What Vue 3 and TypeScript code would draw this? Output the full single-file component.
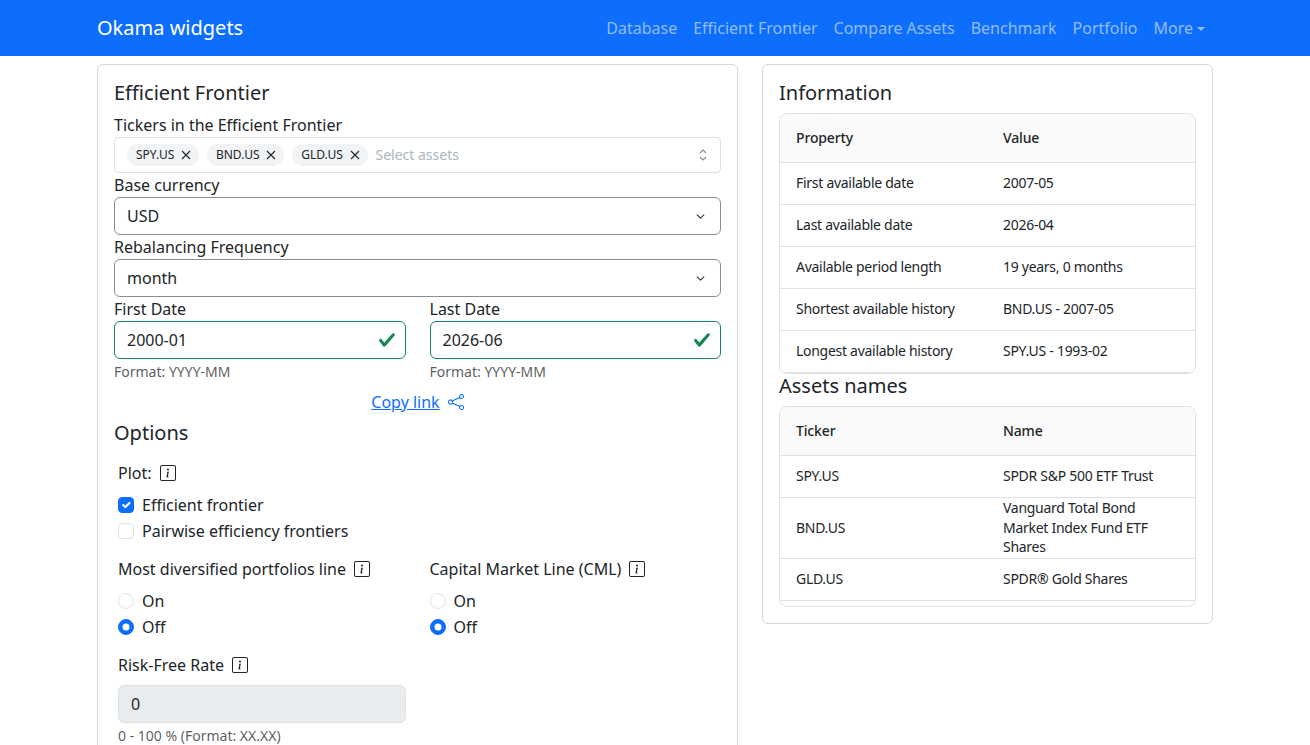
<script setup lang="ts">
import { ref } from "vue";

const navLinks = ["Database", "Efficient Frontier", "Compare Assets", "Benchmark", "Portfolio"];
const tickers = ["SPY.US", "BND.US", "GLD.US"];

const firstDate = ref("2000-01");
const lastDate = ref("2026-06");
const riskFree = ref("0");
const plotFrontier = ref(true);
const plotPairwise = ref(false);
const mdpLine = ref("off");
const cmlLine = ref("off");

const info = [
  ["First available date", "2007-05"],
  ["Last available date", "2026-04"],
  ["Available period length", "19 years, 0 months"],
  ["Shortest available history", "BND.US - 2007-05"],
  ["Longest available history", "SPY.US - 1993-02"],
];
const names = [
  ["SPY.US", "SPDR S&P 500 ETF Trust"],
  ["BND.US", "Vanguard Total Bond Market Index Fund ETF Shares"],
  ["GLD.US", "SPDR® Gold Shares"],
];
</script>

<template>
  <div class="page">
    <nav class="navbar">
      <div class="nav-inner">
        <span class="brand">Okama widgets</span>
        <ul class="nav-links">
          <li v-for="link in navLinks" :key="link">{{ link }}</li>
          <li class="more">More<span class="caret"></span></li>
        </ul>
      </div>
    </nav>

    <main class="columns">
      <section class="card form-card">
        <h5>Efficient Frontier</h5>
        <label class="lbl">Tickers in the Efficient Frontier</label>
        <div class="multi">
          <span v-for="t in tickers" :key="t" class="tag">
            {{ t }}
            <svg class="tag-x" viewBox="0 0 10 10"><path d="M1 1l8 8M9 1l-8 8" /></svg>
          </span>
          <span class="placeholder">Select assets</span>
          <svg class="updown" viewBox="0 0 10 14"><path d="M2 5l3-3 3 3M2 9l3 3 3-3" /></svg>
        </div>

        <label class="lbl">Base currency</label>
        <div class="select">
          <span>USD</span>
          <svg class="chevron" viewBox="0 0 16 16"><path d="m2 5 6 6 6-6" /></svg>
        </div>

        <label class="lbl">Rebalancing Frequency</label>
        <div class="select">
          <span>month</span>
          <svg class="chevron" viewBox="0 0 16 16"><path d="m2 5 6 6 6-6" /></svg>
        </div>

        <div class="two-col">
          <div>
            <label class="lbl">First Date</label>
            <div class="valid-wrap">
              <input v-model="firstDate" class="input valid" type="text" />
              <svg class="tick" viewBox="0 0 8 8"><path d="M2.3 6.73.6 4.53c-.4-1.04.46-1.4 1.1-.8l1.1 1.4 3.4-3.8c.6-.63 1.6-.27 1.2.7l-4 4.6c-.43.5-.8.4-1.1.1z" /></svg>
            </div>
            <div class="hint">Format: YYYY-MM</div>
          </div>
          <div>
            <label class="lbl">Last Date</label>
            <div class="valid-wrap">
              <input v-model="lastDate" class="input valid" type="text" />
              <svg class="tick" viewBox="0 0 8 8"><path d="M2.3 6.73.6 4.53c-.4-1.04.46-1.4 1.1-.8l1.1 1.4 3.4-3.8c.6-.63 1.6-.27 1.2.7l-4 4.6c-.43.5-.8.4-1.1.1z" /></svg>
            </div>
            <div class="hint">Format: YYYY-MM</div>
          </div>
        </div>

        <div class="copy-row">
          <a href="#" class="copy">Copy link</a>
          <svg class="share" viewBox="0 0 16 16"><path d="M13.5 1a1.5 1.5 0 1 0 0 3 1.5 1.5 0 0 0 0-3M11 2.5a2.5 2.5 0 1 1 .603 1.628l-6.718 3.12a2.5 2.5 0 0 1 0 1.504l6.718 3.12a2.5 2.5 0 1 1-.488.876l-6.718-3.12a2.5 2.5 0 1 1 0-3.256l6.718-3.12A2.5 2.5 0 0 1 11 2.5m-8.5 4a1.5 1.5 0 1 0 0 3 1.5 1.5 0 0 0 0-3m11 5.5a1.5 1.5 0 1 0 0 3 1.5 1.5 0 0 0 0-3" /></svg>
        </div>

        <h5 class="options-title">Options</h5>
        <div class="options">
          <div class="opt-label">
            Plot:
            <svg class="info" viewBox="0 0 16 16"><path d="M14 1a1 1 0 0 1 1 1v12a1 1 0 0 1-1 1H2a1 1 0 0 1-1-1V2a1 1 0 0 1 1-1zM2 0a2 2 0 0 0-2 2v12a2 2 0 0 0 2 2h12a2 2 0 0 0 2-2V2a2 2 0 0 0-2-2z" /><path d="m8.93 6.588-2.29.287-.082.38.45.083c.294.07.352.176.288.469l-.738 3.468c-.194.897.105 1.319.808 1.319.545 0 1.178-.252 1.465-.598l.088-.42c-.2.176-.492.246-.686.246-.275 0-.375-.193-.304-.533zM9 4.5a1 1 0 1 1-2 0 1 1 0 0 1 2 0" /></svg>
          </div>
          <label class="check"><input v-model="plotFrontier" type="checkbox" />Efficient frontier</label>
          <label class="check"><input v-model="plotPairwise" type="checkbox" />Pairwise efficiency frontiers</label>
        </div>

        <div class="two-col radios">
          <div class="radio-col first">
            <div class="opt-label">
              Most diversified portfolios line
              <svg class="info" viewBox="0 0 16 16"><path d="M14 1a1 1 0 0 1 1 1v12a1 1 0 0 1-1 1H2a1 1 0 0 1-1-1V2a1 1 0 0 1 1-1zM2 0a2 2 0 0 0-2 2v12a2 2 0 0 0 2 2h12a2 2 0 0 0 2-2V2a2 2 0 0 0-2-2z" /><path d="m8.93 6.588-2.29.287-.082.38.45.083c.294.07.352.176.288.469l-.738 3.468c-.194.897.105 1.319.808 1.319.545 0 1.178-.252 1.465-.598l.088-.42c-.2.176-.492.246-.686.246-.275 0-.375-.193-.304-.533zM9 4.5a1 1 0 1 1-2 0 1 1 0 0 1 2 0" /></svg>
            </div>
            <label class="check"><input v-model="mdpLine" type="radio" name="mdp" value="on" />On</label>
            <label class="check"><input v-model="mdpLine" type="radio" name="mdp" value="off" />Off</label>
          </div>
          <div class="radio-col">
            <div class="opt-label">
              Capital Market Line (CML)
              <svg class="info" viewBox="0 0 16 16"><path d="M14 1a1 1 0 0 1 1 1v12a1 1 0 0 1-1 1H2a1 1 0 0 1-1-1V2a1 1 0 0 1 1-1zM2 0a2 2 0 0 0-2 2v12a2 2 0 0 0 2 2h12a2 2 0 0 0 2-2V2a2 2 0 0 0-2-2z" /><path d="m8.93 6.588-2.29.287-.082.38.45.083c.294.07.352.176.288.469l-.738 3.468c-.194.897.105 1.319.808 1.319.545 0 1.178-.252 1.465-.598l.088-.42c-.2.176-.492.246-.686.246-.275 0-.375-.193-.304-.533zM9 4.5a1 1 0 1 1-2 0 1 1 0 0 1 2 0" /></svg>
            </div>
            <label class="check"><input v-model="cmlLine" type="radio" name="cml" value="on" />On</label>
            <label class="check"><input v-model="cmlLine" type="radio" name="cml" value="off" />Off</label>
          </div>
        </div>

        <div class="two-col risk">
          <div class="radio-col first">
            <div class="opt-label">
              Risk-Free Rate
              <svg class="info" viewBox="0 0 16 16"><path d="M14 1a1 1 0 0 1 1 1v12a1 1 0 0 1-1 1H2a1 1 0 0 1-1-1V2a1 1 0 0 1 1-1zM2 0a2 2 0 0 0-2 2v12a2 2 0 0 0 2 2h12a2 2 0 0 0 2-2V2a2 2 0 0 0-2-2z" /><path d="m8.93 6.588-2.29.287-.082.38.45.083c.294.07.352.176.288.469l-.738 3.468c-.194.897.105 1.319.808 1.319.545 0 1.178-.252 1.465-.598l.088-.42c-.2.176-.492.246-.686.246-.275 0-.375-.193-.304-.533zM9 4.5a1 1 0 1 1-2 0 1 1 0 0 1 2 0" /></svg>
            </div>
            <input v-model="riskFree" class="input disabled" type="text" disabled />
            <div class="hint">0 - 100 % (Format: XX.XX)</div>
          </div>
        </div>
      </section>

      <section class="card info-card">
        <h5>Information</h5>
        <div class="table-box">
          <table>
            <thead>
              <tr><th>Property</th><th>Value</th></tr>
            </thead>
            <tbody>
              <tr v-for="row in info" :key="row[0]">
                <td>{{ row[0] }}</td>
                <td>{{ row[1] }}</td>
              </tr>
            </tbody>
          </table>
        </div>
        <h5 class="names-title">Assets names</h5>
        <div class="table-box names">
          <table>
            <thead>
              <tr><th>Ticker</th><th>Name</th></tr>
            </thead>
            <tbody>
              <tr v-for="row in names" :key="row[0]">
                <td>{{ row[0] }}</td>
                <td>{{ row[1] }}</td>
              </tr>
            </tbody>
          </table>
        </div>
      </section>
    </main>
  </div>
</template>

<style>
html,
body {
  margin: 0;
  background: #fff;
}
</style>

<style scoped>
.page {
  height: 100vh;
  overflow: hidden;
  font-family: "Noto Sans", sans-serif;
  font-size: 16px;
  line-height: 1.5;
  color: #212529;
}
.navbar {
  height: 56px;
  background: #0d6efd;
}
.nav-inner {
  width: 1116px;
  height: 100%;
  margin: 0 auto;
  display: flex;
  align-items: center;
  justify-content: space-between;
}
.brand {
  font-size: 20px;
  color: #fff;
}
.nav-links {
  display: flex;
  list-style: none;
  margin: 0;
  padding: 0;
  color: rgba(255, 255, 255, 0.55);
}
.nav-links li {
  padding: 8px;
}
.caret {
  display: inline-block;
  margin-left: 4px;
  vertical-align: 3px;
  border-top: 4.8px solid;
  border-left: 4.8px solid transparent;
  border-right: 4.8px solid transparent;
}
.columns {
  width: 1116px;
  margin: 8px auto 0;
  display: grid;
  grid-template-columns: 641px 451px;
  gap: 24px;
  align-items: start;
}
.card {
  border: 1px solid #d5d7da;
  border-radius: 6px;
  padding: 16px;
}
.form-card {
  height: 800px;
}
h5 {
  margin: 0 0 8px;
  font-size: 20px;
  font-weight: 400;
  line-height: 1.2;
}
.lbl {
  display: block;
}
.multi {
  height: 36px;
  box-sizing: border-box;
  border: 1px solid #dee2e6;
  border-radius: 4px;
  padding: 0 12px;
  display: flex;
  align-items: center;
  gap: 8px;
  font-size: 14px;
  line-height: 20px;
}
.tag {
  height: 22px;
  padding: 0 8px 0 9px;
  border-radius: 11px;
  background: #f1f3f5;
  font-size: 12px;
  display: flex;
  align-items: center;
  gap: 6.7px;
}
.tag-x {
  width: 10px;
  height: 10px;
  fill: none;
  stroke: #212529;
  stroke-width: 1.1;
}
.placeholder {
  color: #adb5bd;
}
.updown {
  margin-left: auto;
  margin-right: 0;
  width: 10px;
  height: 14px;
  fill: none;
  stroke: #868e96;
  stroke-width: 1.2;
}
.select {
  height: 38px;
  box-sizing: border-box;
  border: 1px solid #868e96;
  border-radius: 6px;
  padding: 0 12px;
  display: flex;
  align-items: center;
  justify-content: space-between;
}
.chevron {
  width: 9px;
  height: 9px;
  margin-right: 3px;
  fill: none;
  stroke: #343a40;
  stroke-width: 2;
  stroke-linecap: round;
  stroke-linejoin: round;
}
.two-col {
  display: grid;
  grid-template-columns: 1fr 1fr;
  gap: 24px;
}
.valid-wrap {
  position: relative;
}
.input {
  display: block;
  width: 100%;
  height: 38px;
  box-sizing: border-box;
  border: 1px solid #dee2e6;
  border-radius: 6px;
  padding: 0 12px;
  font: inherit;
  color: inherit;
  outline: none;
}
.input.valid {
  border-color: #198754;
}
.input.disabled {
  background: #e9ecef;
}
.tick {
  position: absolute;
  right: 10px;
  top: 10px;
  width: 18px;
  height: 18px;
  fill: #198754;
}
.hint {
  margin-top: 2px;
  font-size: 14px;
  color: rgba(33, 37, 41, 0.75);
}
.copy-row {
  margin-top: 8px;
  display: flex;
  justify-content: center;
  align-items: center;
  gap: 8px;
}
.copy {
  color: #0d6efd;
}
.share {
  width: 16px;
  height: 16px;
  fill: #0d6efd;
}
.options-title {
  margin-top: 7px;
}
.options {
  padding: 4px;
  margin-top: 12px;
}
.opt-label {
  display: flex;
  align-items: center;
  gap: 8px;
  margin-bottom: 7px;
}
.info {
  width: 16px;
  height: 16px;
  fill: currentColor;
}
.check {
  display: flex;
  align-items: center;
  gap: 8px;
  height: 26px;
}
.check input {
  appearance: none;
  width: 16px;
  height: 16px;
  margin: 0;
  border: 1px solid #dee2e6;
  background: #fff center / contain no-repeat;
}
.check input[type="checkbox"] {
  border-radius: 4px;
}
.check input[type="radio"] {
  border-radius: 50%;
}
.check input:checked {
  border-color: #0d6efd;
  background-color: #0d6efd;
}
.check input[type="checkbox"]:checked {
  background-image: url("data:image/svg+xml,%3csvg xmlns='http://www.w3.org/2000/svg' viewBox='0 0 20 20'%3e%3cpath fill='none' stroke='%23fff' stroke-linecap='round' stroke-linejoin='round' stroke-width='3' d='m6 10 3 3 6-6'/%3e%3c/svg%3e");
}
.check input[type="radio"]:checked {
  background-image: url("data:image/svg+xml,%3csvg xmlns='http://www.w3.org/2000/svg' viewBox='-4 -4 8 8'%3e%3ccircle r='2' fill='%23fff'/%3e%3c/svg%3e");
}
.radios {
  margin-top: 9px;
}
.radio-col.first {
  padding-left: 4px;
}
.risk {
  margin-top: 13px;
}
.risk .opt-label {
  margin-bottom: 8px;
}
.table-box {
  border: 1px solid #dee2e6;
  border-radius: 8px;
  overflow: hidden;
  font-size: 14px;
}
.table-box.names {
  padding-bottom: 5px;
}
.names-title {
  margin-top: 0;
}
table {
  width: 100%;
  table-layout: fixed;
  border-collapse: collapse;
}
th {
  height: 47px;
  padding: 0 16px 1px;
  background: #fafafa;
  text-align: left;
  font-weight: 500;
  letter-spacing: -0.14px;
  border-bottom: 1px solid #dee2e6;
}
th:first-child {
  width: 207px;
  box-sizing: border-box;
}
td {
  height: 40px;
  padding: 0 16px 1px;
  line-height: 19.6px;
  letter-spacing: -0.28px;
  border-bottom: 1px solid #dee2e6;
}
</style>
